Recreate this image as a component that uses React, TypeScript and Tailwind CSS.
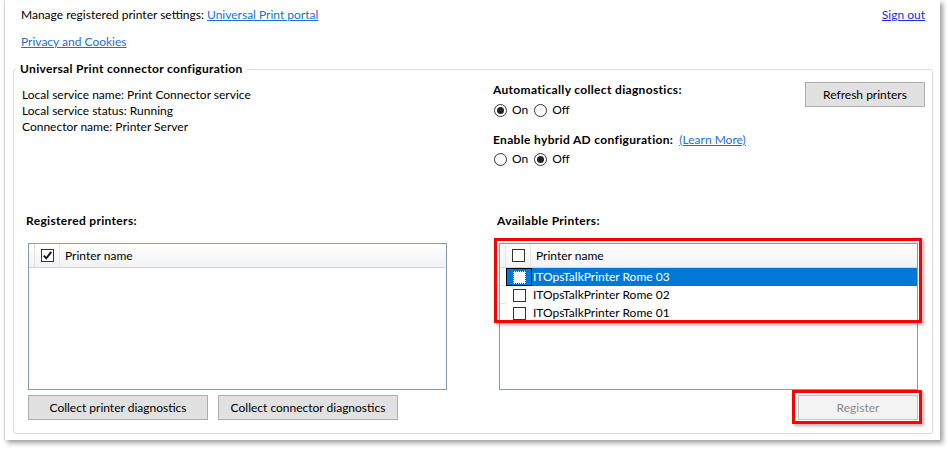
import React from "react";

function Check({ checked = false }: { checked?: boolean }) {
  return (
    <div className="w-[13px] h-[13px] border border-[#333333] bg-white flex items-center justify-center">
      {checked && (
        <svg width="11" height="11" viewBox="0 0 11 11">
          <path d="M1.8 5.6 L4.3 8.3 L9.3 1.8" fill="none" stroke="#111" strokeWidth="1.9" />
        </svg>
      )}
    </div>
  );
}

function Radio({ checked, label }: { checked: boolean; label: string }) {
  return (
    <div className="flex items-center">
      <div className="w-[13px] h-[13px] rounded-full border border-[#333333] bg-white flex items-center justify-center">
        {checked && <div className="w-[7px] h-[7px] rounded-full bg-[#222222]" />}
      </div>
      <span className="ml-[5px]">{label}</span>
    </div>
  );
}

function Header({ checked }: { checked: boolean }) {
  return (
    <div className="flex h-[24px] bg-gradient-to-b from-white to-[#f1f2f4] border-b border-[#d5d5d5]">
      <div className="w-[6px] border-r border-[#e3e3e3]" />
      <div className="w-[25px] border-r border-[#e8e8e8] flex items-center justify-center">
        <Check checked={checked} />
      </div>
      <div className="pl-[5px] flex items-center">Printer name</div>
    </div>
  );
}

function Row({ name, selected }: { name: string; selected?: boolean }) {
  return (
    <div className="flex h-[18px]">
      <div className="w-[6px] bg-white border-b border-[#e6e6e6]" />
      <div
        className={
          selected
            ? "flex-1 flex bg-[#0078d7] text-white"
            : "flex-1 flex"
        }
      >
        <div
          className={
            selected
              ? "w-[26px] border border-black flex items-center justify-center"
              : "w-[26px] flex items-center justify-center"
          }
        >
          {selected ? (
            <div className="w-[13px] h-[13px] bg-white border border-dotted border-[#444]" />
          ) : (
            <Check />
          )}
        </div>
        <div className="pl-[1px] flex items-center">{name}</div>
      </div>
    </div>
  );
}

function Btn({ children, w, disabled }: { children: React.ReactNode; w: string; disabled?: boolean }) {
  return (
    <div
      className={
        (disabled
          ? "bg-[#f3f3f3] border-[#c4c4c4] text-[#8a8a8a] "
          : "bg-[#e1e1e1] border-[#adadad] text-black ") +
        "h-[25px] border flex items-center justify-center " +
        w
      }
    >
      {children}
    </div>
  );
}

export default function App() {
  return (
    <div className="w-[948px] h-[449px] bg-white relative overflow-hidden font-['Lato','Noto_Sans',sans-serif] text-[12px] leading-[16px] text-black">
      <div className="ml-[4px] w-[936px] h-[440px] bg-white border-l border-[#dadada] shadow-[3px_3px_5px_rgba(0,0,0,0.38)] pt-[7px]">
        <div className="flex justify-between pl-[16px] pr-[15px]">
          <div>
            Manage registered printer settings:{" "}
            <span className="text-[#1c6fd1] underline">Universal Print portal</span>
          </div>
          <span className="text-[#2424f0] underline">Sign out</span>
        </div>
        <div className="pl-[16px] mt-[11px]">
          <span className="text-[#1c6fd1] underline">Privacy and Cookies</span>
        </div>

        <fieldset className="ml-[8px] mt-[11px] w-[920px] h-[373px] border border-[#dcdcdc] rounded-[3px] px-0 pb-0">
          <legend className="ml-[2px] px-[4px] font-bold tracking-[0.33px]">Universal Print connector configuration</legend>

          <div className="flex">
            <div className="w-[471px] pl-[8px] pt-[10px]">
              <div>Local service name: Print Connector service</div>
              <div>Local service status: Running</div>
              <div>Connector name: Printer Server</div>
            </div>
            <div className="flex-1 flex justify-between pl-[8px] pr-[7px] pt-[5px]">
              <div>
                <div className="font-bold tracking-[0.33px]">Automatically collect diagnostics:</div>
                <div className="flex mt-[4px] gap-[6px] pl-[1px]">
                  <Radio checked label="On" />
                  <Radio checked={false} label="Off" />
                </div>
                <div className="mt-[14px] flex">
                  <span className="font-bold tracking-[0.33px]">Enable hybrid AD configuration:</span>
                  <span className="ml-[6px] text-[#1c6fd1] underline">(Learn More)</span>
                </div>
                <div className="flex mt-[3px] gap-[6px] pl-[1px]">
                  <Radio checked={false} label="On" />
                  <Radio checked label="Off" />
                </div>
              </div>
              <Btn w="w-[120px] h-[24px]">Refresh printers</Btn>
            </div>
          </div>

          <div className="flex gap-[52px] pl-[14px] mt-[46px]">
            <div className="w-[419px]">
              <div className="font-bold tracking-[0.33px] -ml-[2px]">Registered printers:</div>
              <div className="mt-[14px] h-[147px] border border-[#7f9db9] bg-white">
                <Header checked />
              </div>
              <div className="flex gap-[10px] mt-[5px]">
                <Btn w="w-[180px]">Collect printer diagnostics</Btn>
                <Btn w="w-[180px]">Collect connector diagnostics</Btn>
              </div>
            </div>
            <div className="w-[419px]">
              <div className="font-bold tracking-[0.33px] -ml-[2px]">Available Printers:</div>
              <div className="mt-[14px] h-[147px] border border-[#7f9db9] bg-white">
                <Header checked={false} />
                <Row name="ITOpsTalkPrinter Rome 03" selected />
                <Row name="ITOpsTalkPrinter Rome 02" />
                <Row name="ITOpsTalkPrinter Rome 01" />
              </div>
              <div className="flex justify-end mt-[5px]">
                <Btn w="w-[120px]" disabled>Register</Btn>
              </div>
            </div>
          </div>
        </fieldset>
      </div>

      <div className="absolute left-[494px] top-[238px] w-[428px] h-[85px] border-[3px] border-[#ff0000] shadow-[2px_2px_3px_rgba(0,0,0,0.3)]" />
      <div className="absolute left-[792px] top-[390px] w-[130px] h-[34px] border-[3px] border-[#ff0000] shadow-[2px_2px_3px_rgba(0,0,0,0.3)]" />
    </div>
  );
}
